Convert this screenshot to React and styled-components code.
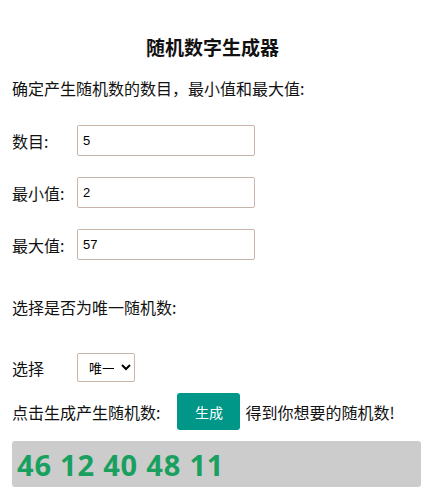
import { useState } from "react";
import styled, { createGlobalStyle } from "styled-components";

const GlobalStyle = createGlobalStyle`
  body {
    margin: 0;
    background: #fff;
    font-family: "Noto Sans CJK SC", "Noto Sans", sans-serif;
    color: #111;
  }
`;

const Page = styled.div`
  display: flex;
  flex-direction: column;
  padding: 35px 7px 0 12px;
`;

const Title = styled.h2`
  margin: 0;
  padding-right: 8px;
  font-size: 19px;
  line-height: 24px;
  font-weight: 700;
  text-align: center;
`;

const Text = styled.p`
  margin: ${(p) => p.$top || 0}px 0 0;
  font-size: 16px;
  line-height: 24px;
`;

const Fields = styled.div`
  display: flex;
  flex-direction: column;
  gap: 21px;
  margin-top: 25px;
`;

const Row = styled.label`
  display: grid;
  grid-template-columns: 65px auto;
  align-items: center;
  justify-content: start;
  font-size: 16px;
  margin-top: ${(p) => p.$top || 0}px;
`;

const Input = styled.input`
  box-sizing: border-box;
  width: 178px;
  height: 31px;
  padding: 0 5px;
  border: 1px solid #c9b6aa;
  border-radius: 2px;
  font-family: "Liberation Sans", Arial, sans-serif;
  font-size: 13px;
  color: #000;
  outline: none;
`;

const Select = styled.select`
  box-sizing: border-box;
  width: 58px;
  height: 29px;
  padding: 0 4px 0 7px;
  border: 1px solid #c9b6aa;
  border-radius: 2px;
  background: #fff;
  font-family: "Noto Sans CJK SC", sans-serif;
  font-size: 13px;
  color: #000;
`;

const Action = styled.div`
  display: flex;
  align-items: center;
  margin-top: 11px;
  font-size: 16px;
  line-height: 24px;
`;

const Button = styled.button`
  height: 37px;
  width: 63px;
  margin: 0 5px 0 17px;
  border: none;
  border-radius: 3px;
  background: #009688;
  color: #fff;
  font-family: "Noto Sans CJK SC", sans-serif;
  font-size: 14px;
  cursor: pointer;
`;

const Result = styled.div`
  margin-top: 11px;
  height: 46px;
  display: flex;
  align-items: center;
  padding: 0 5px;
  background: #cccccc;
  border-radius: 3px;
  color: #19a05f;
  font-family: "Open Sans", "Noto Sans", sans-serif;
  font-weight: 700;
  font-size: 29px;
  letter-spacing: 0.8px;
`;

export default function App() {
  const [count, setCount] = useState("5");
  const [min, setMin] = useState("2");
  const [max, setMax] = useState("57");
  const [unique, setUnique] = useState("unique");
  const [nums, setNums] = useState([46, 12, 40, 48, 11]);

  const generate = () => {
    const n = parseInt(count, 10) || 0;
    const lo = parseInt(min, 10) || 0;
    const hi = parseInt(max, 10) || 0;
    const out = [];
    let guard = 0;
    while (out.length < n && guard < 10000) {
      guard++;
      const v = lo + Math.floor(Math.random() * (hi - lo + 1));
      if (unique === "unique" && out.includes(v)) continue;
      out.push(v);
    }
    setNums(out);
  };

  return (
    <>
      <GlobalStyle />
      <Page>
        <Title>随机数字生成器</Title>
        <Text $top={17}>确定产生随机数的数目，最小值和最大值:</Text>
        <Fields>
          <Row>
            数目:
            <Input value={count} onChange={(e) => setCount(e.target.value)} />
          </Row>
          <Row>
            最小值:
            <Input value={min} onChange={(e) => setMin(e.target.value)} />
          </Row>
          <Row>
            最大值:
            <Input value={max} onChange={(e) => setMax(e.target.value)} />
          </Row>
        </Fields>
        <Text $top={35}>选择是否为唯一随机数:</Text>
        <Row $top={34}>
          选择
          <Select value={unique} onChange={(e) => setUnique(e.target.value)}>
            <option value="unique">唯一</option>
            <option value="repeat">重复</option>
          </Select>
        </Row>
        <Action>
          点击生成产生随机数:
          <Button onClick={generate}>生成</Button>
          得到你想要的随机数!
        </Action>
        <Result>{nums.join(" ")}</Result>
      </Page>
    </>
  );
}
